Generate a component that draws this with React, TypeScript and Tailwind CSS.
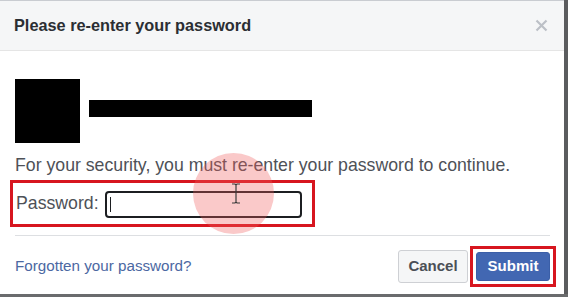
import React from "react";

export default function App() {
  return (
    <div
      className="relative w-[568px] h-[297px] overflow-hidden bg-white flex flex-col"
      style={{ fontFamily: '"Liberation Sans", Arial, sans-serif' }}
    >
      <div className="flex flex-1 min-h-0">
        <div className="flex flex-col w-[564px] border-t border-[#c9ccd1]">
          {/* header */}
          <div className="h-[50px] shrink-0 bg-[#f5f6f7] border-b border-[#e5e5e5] flex items-center justify-between pl-[14px] pr-[15px]">
            <span className="text-[16.3px] font-bold text-[#2b2e33] leading-none">Please re-enter your password</span>
            <svg width="13" height="13" viewBox="0 0 13 13" className="mr-[1px]">
              <path d="M1.5 1.5 L11.5 11.5 M11.5 1.5 L1.5 11.5" stroke="#bcc0c6" strokeWidth="2.2" />
            </svg>
          </div>
          {/* body */}
          <div className="flex flex-col px-[15px] pt-[28px]">
            <div className="flex items-start gap-[9px]">
              <div className="w-[65px] h-[64px] bg-black" />
              <div className="w-[223px] h-[17px] bg-black mt-[21px]" />
            </div>
            <p className="mt-[12px] text-[17.7px] leading-[20px] text-[#4e5157] whitespace-nowrap">
              For your security, you must re-enter your password to continue.
            </p>
            <div className="mt-[5px] -ml-[5px] w-[305px] h-[47px] border-[3px] border-[#d7161f] flex items-center pl-[3px] gap-[6px]">
              <span className="text-[17.7px] leading-none text-[#4e5157]">Password:</span>
              <div className="w-[197px] h-[27px] border-[2.5px] border-[#1c1e21] rounded-[4px] flex items-center pl-[3px] mt-[2px]">
                <div className="w-[1.5px] h-[15px] bg-[#1c1e21]" />
              </div>
            </div>
            <div className="mt-[8px] h-px w-[535px] bg-[#dddfe2]" />
          </div>
          {/* footer */}
          <div className="flex flex-1 items-center justify-between pl-[15px] pr-[8px] pt-[2px]">
            <span className="text-[15.2px] text-[#4c68a2] leading-none">Forgotten your password?</span>
            <div className="flex items-center gap-[2px]">
              <div className="w-[70px] h-[33px] rounded-[3px] border border-[#ced0d4] bg-[#f5f6f7] flex items-center justify-center text-[15px] font-bold text-[#4b4f56]">
                Cancel
              </div>
              <div className="w-[86px] h-[41px] border-[3px] border-[#d7161f] flex items-center justify-center">
                <div className="w-[74px] h-[29px] rounded-[3px] bg-[#4267b2] border border-[#3b5fa8] flex items-center justify-center text-[15px] font-bold text-white">
                  Submit
                </div>
              </div>
            </div>
          </div>
        </div>
        <div className="w-[4px] bg-[#5b5c5e]" />
      </div>
      <div className="h-[3px] shrink-0 bg-[#6a6b6d]" />

      {/* click highlight */}
      <div className="absolute left-[193px] top-[153px] w-[81px] h-[81px] rounded-full bg-[rgba(240,90,90,0.33)] pointer-events-none" />
      {/* I-beam cursor */}
      <svg className="absolute left-[231px] top-[183px]" width="10" height="21" viewBox="0 0 10 21">
        <path d="M1 1 H4 L5 2 L6 1 H9 M5 2 V19 M1 20 H4 L5 19 L6 20 H9" stroke="#3a3a3a" strokeWidth="1.2" fill="none" />
      </svg>
    </div>
  );
}
